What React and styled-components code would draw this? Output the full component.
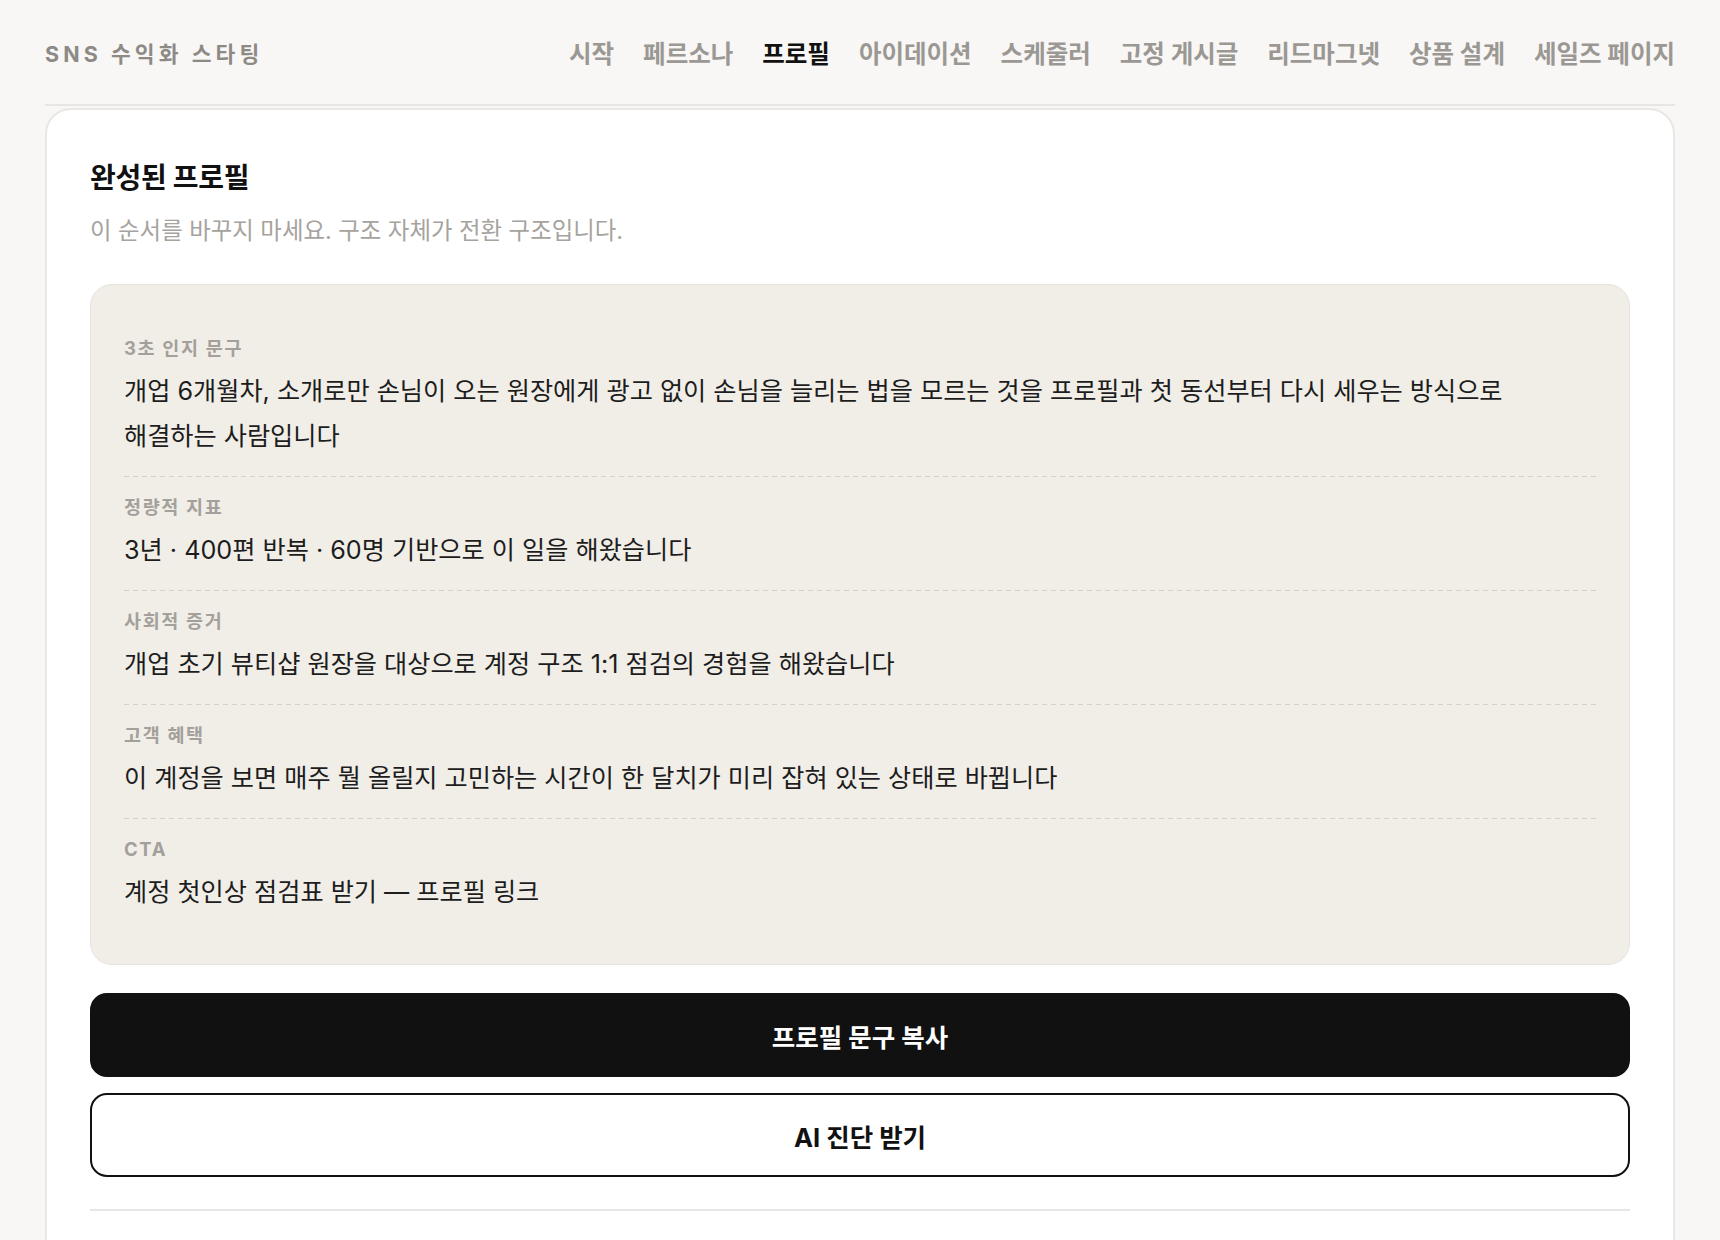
import React from "react";
import styled, { createGlobalStyle } from "styled-components";

const Global = createGlobalStyle`
  html, body { margin: 0; padding: 0; background: #f8f7f5; }
  body {
    font-family: Inter, "Noto Sans CJK KR", "Noto Sans", sans-serif;
    color: #1c1c1c;
    word-break: keep-all;
  }
  * { box-sizing: border-box; }
`;

const Page = styled.div`
  padding: 0 45px;
`;

const Header = styled.header`
  height: 106px;
  display: flex;
  align-items: center;
  justify-content: space-between;
  border-bottom: 2px solid #e8e6e2;
`;

const Logo = styled.div`
  font-size: 21.5px;
  font-weight: 700;
  letter-spacing: 0.19em;
  color: #8d8a86;
`;

const Nav = styled.nav`
  display: flex;
  gap: 29px;
`;

const NavItem = styled.a`
  font-size: 24.5px;
  font-weight: 700;
  color: ${(p) => (p.$active ? "#111" : "#9b9894")};
  text-decoration: none;
  white-space: nowrap;
`;

const Card = styled.main`
  margin-top: 2px;
  background: #fff;
  border: 2px solid #e9e7e3;
  border-radius: 26px;
  padding: 50px 43px 80px;
`;

const Title = styled.h1`
  margin: 0;
  font-size: 28px;
  line-height: 36px;
  font-weight: 700;
  letter-spacing: -0.01em;
  color: #111;
`;

const Subtitle = styled.p`
  margin: 20px 0 0;
  font-size: 23.4px;
  line-height: 30px;
  color: #a6a39e;
`;

const Box = styled.section`
  margin-top: 38px;
  background: #f1eee8;
  border: 1px solid #e7e4de;
  border-radius: 22px;
  padding: 32px 33px;
`;

const Row = styled.div`
  padding: 20px 0 17px;
  background: ${(p) =>
    p.$first
      ? "none"
      : "linear-gradient(to right, #d4d1cb 60%, transparent 60%) top left / 9px 1px repeat-x"};
`;

const Label = styled.div`
  font-size: 18.5px;
  line-height: 22px;
  font-weight: 700;
  letter-spacing: 0.09em;
  color: #a3a09b;
`;

const Text = styled.div`
  margin-top: 10px;
  font-size: 25.2px;
  line-height: 45px;
  color: #1d1d1d;
  word-break: keep-all;
`;

const Button = styled.button`
  display: flex;
  align-items: center;
  justify-content: center;
  width: 100%;
  height: 84px;
  margin-top: ${(p) => (p.$primary ? "28px" : "16px")};
  border-radius: 17px;
  border: 2px solid #111;
  background: ${(p) => (p.$primary ? "#111" : "#fff")};
  color: ${(p) => (p.$primary ? "#fff" : "#111")};
  font-family: inherit;
  font-size: 25.5px;
  font-weight: 700;
  cursor: pointer;
`;

const Divider = styled.hr`
  margin: 32px 0 0;
  border: 0;
  border-top: 2px solid #e8e6e2;
`;

const navItems = [
  "시작",
  "페르소나",
  "프로필",
  "아이데이션",
  "스케줄러",
  "고정 게시글",
  "리드마그넷",
  "상품 설계",
  "세일즈 페이지",
];

const rows = [
  {
    label: "3초 인지 문구",
    text: "개업 6개월차, 소개로만 손님이 오는 원장에게 광고 없이 손님을 늘리는 법을 모르는 것을 프로필과 첫 동선부터 다시 세우는 방식으로 해결하는 사람입니다",
  },
  { label: "정량적 지표", text: "3년 · 400편 반복 · 60명 기반으로 이 일을 해왔습니다" },
  { label: "사회적 증거", text: "개업 초기 뷰티샵 원장을 대상으로 계정 구조 1:1 점검의 경험을 해왔습니다" },
  { label: "고객 혜택", text: "이 계정을 보면 매주 뭘 올릴지 고민하는 시간이 한 달치가 미리 잡혀 있는 상태로 바뀝니다" },
  { label: "CTA", text: "계정 첫인상 점검표 받기 — 프로필 링크" },
];

export default function App() {
  return (
    <>
      <Global />
      <Page>
        <Header>
          <Logo>SNS 수익화 스타팅</Logo>
          <Nav>
            {navItems.map((n) => (
              <NavItem key={n} $active={n === "프로필"}>
                {n}
              </NavItem>
            ))}
          </Nav>
        </Header>
        <Card>
          <Title>완성된 프로필</Title>
          <Subtitle>이 순서를 바꾸지 마세요. 구조 자체가 전환 구조입니다.</Subtitle>
          <Box>
            {rows.map((r, i) => (
              <Row key={r.label} $first={i === 0}>
                <Label>{r.label}</Label>
                <Text>{r.text}</Text>
              </Row>
            ))}
          </Box>
          <Button $primary>프로필 문구 복사</Button>
          <Button>AI 진단 받기</Button>
          <Divider />
        </Card>
      </Page>
    </>
  );
}
